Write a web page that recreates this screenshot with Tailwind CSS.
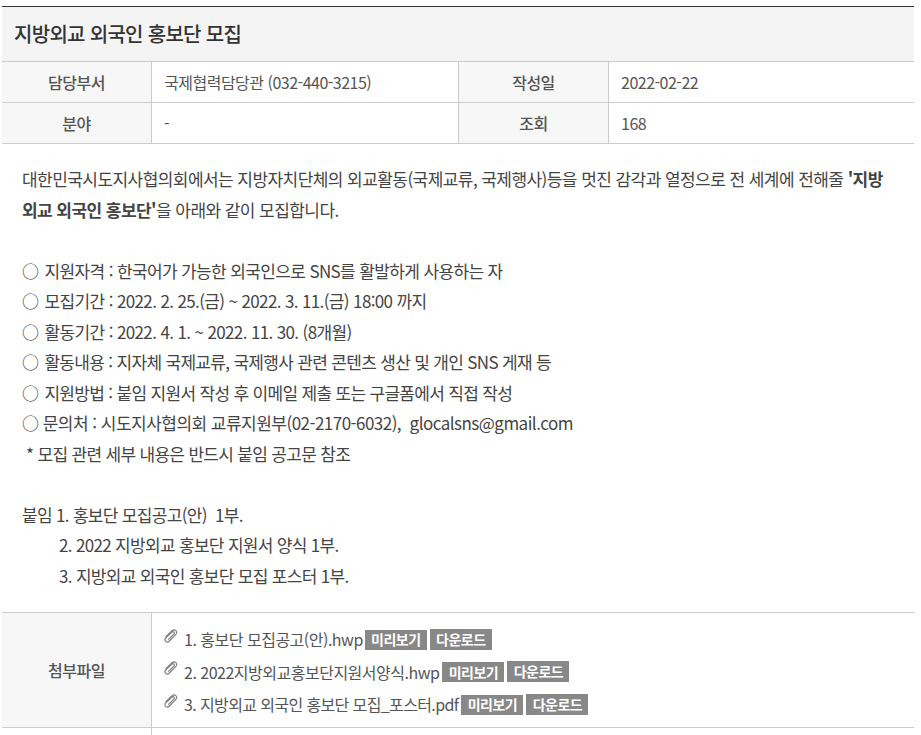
<!DOCTYPE html>
<html lang="ko">
<head>
<meta charset="utf-8">
<script src="https://cdn.jsdelivr.net/npm/@tailwindcss/browser@4"></script>
</head>
<body class="bg-white overflow-hidden">
<div class="w-[921px] h-[735px] overflow-hidden pt-[6px] pl-[2px] font-['Noto_Sans_CJK_KR','Noto_Sans',sans-serif] text-[#555] text-[16px] tracking-[-0.5px]">
  <div class="w-[912px]">
    <div class="h-[56px] border-t border-t-[#333] border-b border-b-[#ccc] bg-[#f4f4f4] flex items-center pl-[12px] text-[20px] font-medium text-[#333] tracking-[-0.7px]">지방외교 외국인 홍보단 모집</div>
    <div class="grid grid-cols-[150px_1fr_150px_305px] h-[41px] border-b border-[#ccc] items-stretch">
      <div class="bg-[#f7f7f7] border-r border-[#ccc] flex items-center justify-center font-medium">담당부서</div>
      <div class="flex items-center pl-[12px] border-r border-[#ccc]">국제협력담당관 (032-440-3215)</div>
      <div class="bg-[#f7f7f7] border-r border-[#ccc] flex items-center justify-center font-medium">작성일</div>
      <div class="flex items-center pl-[12px]">2022-02-22</div>
    </div>
    <div class="grid grid-cols-[150px_1fr_150px_305px] h-[41px] border-b border-[#ccc] items-stretch">
      <div class="bg-[#f7f7f7] border-r border-[#ccc] flex items-center justify-center font-medium">분야</div>
      <div class="flex items-center pl-[12px] border-r border-[#ccc]">-</div>
      <div class="bg-[#f7f7f7] border-r border-[#ccc] flex items-center justify-center font-medium">조회</div>
      <div class="flex items-center pl-[12px]">168</div>
    </div>
    <div class="pt-[20px] pb-[21px] pl-[20px] leading-[30.5px] text-[17px] text-[#444] h-[468px] tracking-[-0.68px]">
      <p class="tracking-[-0.56px]">대한민국시도지사협의회에서는 지방자치단체의 외교활동(국제교류, 국제행사)등을 멋진 감각과 열정으로 전 세계에 전해줄 <strong class="font-bold">'지방</strong><br><strong class="font-bold">외교 외국인 홍보단'</strong>을 아래와 같이 모집합니다.</p>
      <p>&nbsp;</p>
      <p class="tracking-[-0.63px]">○ <span class="ml-[2px]">지원자격 : 한국어가 가능한 외국인으로 SNS를 활발하게 사용하는 자</span></p>
      <p class="tracking-[-0.63px]">○ <span class="ml-[2px]">모집기간 : 2022. 2. 25.(금) ~ 2022. 3. 11.(금) 18:00 까지</span></p>
      <p class="tracking-[-0.63px]">○ <span class="ml-[2px]">활동기간 : 2022. 4. 1. ~ 2022. 11. 30. (8개월)</span></p>
      <p>○ <span class="ml-[2px]">활동내용 : 지자체 국제교류, 국제행사 관련 콘텐츠 생산 및 개인 SNS 게재 등</span></p>
      <p>○ <span class="ml-[2px]">지원방법 : 붙임 지원서 작성 후 이메일 제출 또는 구글폼에서 직접 작성</span></p>
      <p class="tracking-[-0.52px]">○ 문의처 : 시도지사협의회 교류지원부(02-2170-6032),&nbsp; glocalsns@gmail.com</p>
      <p>&nbsp;* 모집 관련 세부 내용은 반드시 붙임 공고문 참조</p>
      <p>&nbsp;</p>
      <p>붙임 1. 홍보단 모집공고(안)&nbsp; 1부.</p>
      <p class="pl-[37px]">2. 2022 지방외교 홍보단 지원서 양식 1부.</p>
      <p class="pl-[37px]">3. 지방외교 외국인 홍보단 모집 포스터 1부.</p>
    </div>
    <div class="grid grid-cols-[150px_1fr] h-[116px] border-y border-[#ccc]">
      <div class="bg-[#f7f7f7] border-r border-[#ccc] flex items-center justify-center font-medium">첨부파일</div>
      <div class="pl-[12px] pt-[13px] flex flex-col gap-[6.5px]">
        <div class="h-[26px] flex items-center gap-[5px]">
          <svg class="w-[15px] h-[15px] -mt-[6px] shrink-0" viewBox="0 0 15 15" fill="none" stroke="#808080" stroke-width="1.2"><path d="M1.6 8 7.8 1.9c1.2-1.2 3-1.3 4.1-.3s1 2.9-.2 4.1L5.4 12c-1.2 1.2-2.8 1.3-3.8.4s-.9-2.6.3-3.7L7.6 3.2c.7-.7 1.7-.8 2.3-.2s.5 1.6-.2 2.3L4.2 10.6"/></svg>
          <span>1. 홍보단 모집공고(안).hwp</span>
          <span class="flex gap-[3px] ml-[-3px] items-end"><span class="bg-[#888] text-white text-[14px] font-bold h-[20px] w-[62px] flex items-center justify-center">미리보기</span><span class="bg-[#888] text-white text-[14px] font-bold h-[21px] w-[62px] flex items-center justify-center">다운로드</span></span>
        </div>
        <div class="h-[26px] flex items-center gap-[5px]">
          <svg class="w-[15px] h-[15px] -mt-[6px] shrink-0" viewBox="0 0 15 15" fill="none" stroke="#808080" stroke-width="1.2"><path d="M1.6 8 7.8 1.9c1.2-1.2 3-1.3 4.1-.3s1 2.9-.2 4.1L5.4 12c-1.2 1.2-2.8 1.3-3.8.4s-.9-2.6.3-3.7L7.6 3.2c.7-.7 1.7-.8 2.3-.2s.5 1.6-.2 2.3L4.2 10.6"/></svg>
          <span>2. 2022지방외교홍보단지원서양식.hwp</span>
          <span class="flex gap-[3px] ml-[-2px] items-end"><span class="bg-[#888] text-white text-[14px] font-bold h-[20px] w-[62px] flex items-center justify-center">미리보기</span><span class="bg-[#888] text-white text-[14px] font-bold h-[21px] w-[62px] flex items-center justify-center">다운로드</span></span>
        </div>
        <div class="h-[26px] flex items-center gap-[5px]">
          <svg class="w-[15px] h-[15px] -mt-[6px] shrink-0" viewBox="0 0 15 15" fill="none" stroke="#808080" stroke-width="1.2"><path d="M1.6 8 7.8 1.9c1.2-1.2 3-1.3 4.1-.3s1 2.9-.2 4.1L5.4 12c-1.2 1.2-2.8 1.3-3.8.4s-.9-2.6.3-3.7L7.6 3.2c.7-.7 1.7-.8 2.3-.2s.5 1.6-.2 2.3L4.2 10.6"/></svg>
          <span class="tracking-[-0.62px]">3. 지방외교 외국인 홍보단 모집_포스터.pdf</span>
          <span class="flex gap-[3px] ml-[-2px] items-end"><span class="bg-[#888] text-white text-[14px] font-bold h-[20px] w-[62px] flex items-center justify-center">미리보기</span><span class="bg-[#888] text-white text-[14px] font-bold h-[21px] w-[62px] flex items-center justify-center">다운로드</span></span>
        </div>
      </div>
    </div>
    <div class="grid grid-cols-[150px_1fr] h-[20px]"><div class="border-r border-[#ccc]"></div><div></div></div>
  </div>
</div>
</body>
</html>
